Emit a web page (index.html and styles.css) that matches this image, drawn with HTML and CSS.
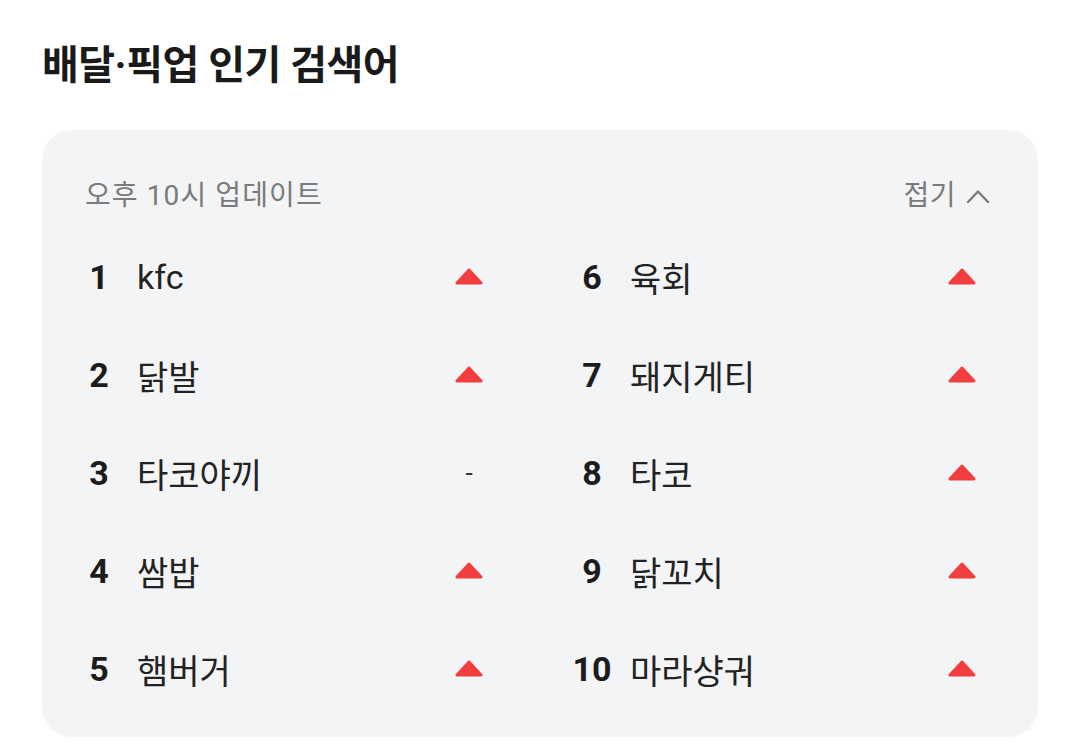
FILE: index.html
```html
<!DOCTYPE html>
<html lang="ko">
<head>
<meta charset="utf-8">
<title>배달·픽업 인기 검색어</title>
<link rel="stylesheet" href="styles.css">
</head>
<body>
<main class="page">
  <h1 class="title">배달·픽업 인기 검색어</h1>
  <section class="card">
    <div class="card-head">
      <span class="updated">오후 10시 업데이트</span>
      <button class="fold" type="button">접기
        <svg class="chev" width="24" height="16" viewBox="0 0 24 16" aria-hidden="true"><path d="M2 14 L12 3.5 L22 14" fill="none" stroke="#7a7a7a" stroke-width="2.4" stroke-linecap="round" stroke-linejoin="round"/></svg>
      </button>
    </div>
    <ol class="ranks">
      <li class="rank"><span class="num">1</span><span class="name">kfc</span><span class="trend"><svg class="up" width="30" height="18" viewBox="0 0 30 18"><path d="M15 2 L27 15 L3 15 Z" fill="#f23e3e" stroke="#f23e3e" stroke-width="3" stroke-linejoin="round"/></svg></span></li>
      <li class="rank"><span class="num">6</span><span class="name">육회</span><span class="trend"><svg class="up" width="30" height="18" viewBox="0 0 30 18"><path d="M15 2 L27 15 L3 15 Z" fill="#f23e3e" stroke="#f23e3e" stroke-width="3" stroke-linejoin="round"/></svg></span></li>
      <li class="rank"><span class="num">2</span><span class="name">닭발</span><span class="trend"><svg class="up" width="30" height="18" viewBox="0 0 30 18"><path d="M15 2 L27 15 L3 15 Z" fill="#f23e3e" stroke="#f23e3e" stroke-width="3" stroke-linejoin="round"/></svg></span></li>
      <li class="rank"><span class="num">7</span><span class="name">돼지게티</span><span class="trend"><svg class="up" width="30" height="18" viewBox="0 0 30 18"><path d="M15 2 L27 15 L3 15 Z" fill="#f23e3e" stroke="#f23e3e" stroke-width="3" stroke-linejoin="round"/></svg></span></li>
      <li class="rank"><span class="num">3</span><span class="name">타코야끼</span><span class="trend"><span class="same">-</span></span></li>
      <li class="rank"><span class="num">8</span><span class="name">타코</span><span class="trend"><svg class="up" width="30" height="18" viewBox="0 0 30 18"><path d="M15 2 L27 15 L3 15 Z" fill="#f23e3e" stroke="#f23e3e" stroke-width="3" stroke-linejoin="round"/></svg></span></li>
      <li class="rank"><span class="num">4</span><span class="name">쌈밥</span><span class="trend"><svg class="up" width="30" height="18" viewBox="0 0 30 18"><path d="M15 2 L27 15 L3 15 Z" fill="#f23e3e" stroke="#f23e3e" stroke-width="3" stroke-linejoin="round"/></svg></span></li>
      <li class="rank"><span class="num">9</span><span class="name">닭꼬치</span><span class="trend"><svg class="up" width="30" height="18" viewBox="0 0 30 18"><path d="M15 2 L27 15 L3 15 Z" fill="#f23e3e" stroke="#f23e3e" stroke-width="3" stroke-linejoin="round"/></svg></span></li>
      <li class="rank"><span class="num">5</span><span class="name">햄버거</span><span class="trend"><svg class="up" width="30" height="18" viewBox="0 0 30 18"><path d="M15 2 L27 15 L3 15 Z" fill="#f23e3e" stroke="#f23e3e" stroke-width="3" stroke-linejoin="round"/></svg></span></li>
      <li class="rank"><span class="num">10</span><span class="name">마라샹궈</span><span class="trend"><svg class="up" width="30" height="18" viewBox="0 0 30 18"><path d="M15 2 L27 15 L3 15 Z" fill="#f23e3e" stroke="#f23e3e" stroke-width="3" stroke-linejoin="round"/></svg></span></li>
    </ol>
  </section>
</main>
</body>
</html>
```

FILE: styles.css
```css
html, body {
  margin: 0;
  padding: 0;
  background: #ffffff;
}

body {
  font-family: "Roboto", "Noto Sans CJK KR", sans-serif;
  color: #1e1e1e;
}

.page {
  padding: 42px 41px 0 42px;
}

.title {
  margin: 0 0 40px 0;
  font-size: 40px;
  line-height: 48px;
  font-weight: 700;
  color: #1a1a1a;
  letter-spacing: -0.5px;
}

.card {
  background: #f3f4f6;
  border-radius: 30px;
  height: 607px;
  box-sizing: border-box;
  padding: 46px 62px 19px 37px;
}

.card-head {
  display: flex;
  align-items: center;
  justify-content: space-between;
  height: 40px;
  padding-left: 6px;
  margin-right: -14px;
  margin-bottom: 12px;
}

.updated {
  font-size: 28px;
  letter-spacing: 1.1px;
  color: #7b7b7b;
  line-height: 40px;
}

.fold {
  display: flex;
  align-items: center;
  gap: 10px;
  border: 0;
  background: none;
  padding: 0;
  font: inherit;
  font-size: 28px;
  letter-spacing: 0.5px;
  color: #7a7a7a;
  line-height: 40px;
}

.chev {
  display: block;
}

.ranks {
  list-style: none;
  margin: 0;
  padding: 0;
  display: grid;
  grid-template-columns: 404px 404px;
  column-gap: 89px;
}

.rank {
  display: flex;
  align-items: center;
  height: 98px;
  font-size: 34px;
}

.num {
  width: 40px;
  display: flex;
  justify-content: center;
  font-weight: 700;
  color: #1c1c1c;
}

.name {
  margin-left: 18px;
  flex: 1;
  color: #222222;
}

.trend {
  width: 28px;
  display: flex;
  justify-content: center;
  align-items: center;
}

.up {
  display: block;
  flex: none;
}

.same {
  font-size: 26px;
  line-height: 1;
  color: #333333;
}
```
